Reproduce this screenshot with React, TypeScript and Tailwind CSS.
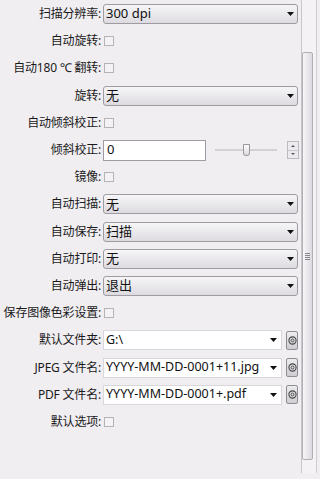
import type { ReactNode } from 'react'

const font = { fontFamily: '"Noto Sans", "Noto Sans CJK SC", sans-serif' }

function Label({ children }: { children: ReactNode }) {
  return (
    <div className="flex items-center justify-end pr-[2px] text-[12px] tracking-[-0.2px] text-[#1a1a1a] whitespace-nowrap">
      {children}
    </div>
  )
}

function Check() {
  return <div className="ml-[1px] h-[10px] w-[10px] border border-[#b5b3b8] bg-[#f4f2f5]" />
}

function Arrow() {
  return (
    <svg width="7" height="4" viewBox="0 0 7 4">
      <path d="M0 0h7L3.5 4z" fill="#111" />
    </svg>
  )
}

function Select({ value }: { value: string }) {
  return (
    <div className="flex h-[20px] w-[195px] items-center justify-between rounded-[3px] border border-[#9e9ca2] bg-gradient-to-b from-[#f6f5f7] to-[#dddbe0] pl-[2px] pr-[3px] text-[13px] text-[#111]">
      <span>{value}</span>
      <Arrow />
    </div>
  )
}

function AtButton() {
  return (
    <div className="flex h-[19px] w-[12px] items-center justify-center rounded-[2px] border border-[#8f8d93] bg-gradient-to-b from-[#ecebee] to-[#cfcdd2]">
      <svg width="9" height="9" viewBox="0 0 10 10">
        <circle cx="5" cy="5" r="4" fill="none" stroke="#444" strokeWidth="1.2" />
        <circle cx="5" cy="5" r="1.6" fill="none" stroke="#444" strokeWidth="1" />
      </svg>
    </div>
  )
}

function Combo({ value }: { value: string }) {
  return (
    <div className="flex items-center gap-[4px]">
      <div className="flex h-[20px] w-[179px] items-center justify-between border border-[#d9d7dc] bg-white pl-[2px] pr-[4px] text-[12.5px] text-[#111]">
        <span>{value}</span>
        <Arrow />
      </div>
      <AtButton />
    </div>
  )
}

function Row({ label, children }: { label: ReactNode; children: ReactNode }) {
  return (
    <div className="grid h-[27.2px] grid-cols-[103px_1fr] items-center">
      <Label>{label}</Label>
      <div className="flex items-center">{children}</div>
    </div>
  )
}

export default function App() {
  return (
    <div className="flex h-[479px] w-[320px] overflow-hidden bg-[#f1eef2]" style={font}>
      <div className="w-[301px] pt-[0.5px]">
        <Row label="扫描分辨率:">
          <Select value="300 dpi" />
        </Row>
        <Row label="自动旋转:">
          <Check />
        </Row>
        <Row label="自动180 ℃ 翻转:">
          <Check />
        </Row>
        <Row label="旋转:">
          <Select value="无" />
        </Row>
        <Row label="自动倾斜校正:">
          <Check />
        </Row>
        <Row label="倾斜校正:">
          <div className="flex h-[21px] w-[103px] items-center border border-[#9e9ca2] bg-white pl-[3px] text-[13px] text-[#111]">
            0
          </div>
          <div className="relative ml-[9px] h-[12px] w-[62px]">
            <div className="absolute left-0 right-0 top-[5px] h-[2px] bg-[#d3d1d6]" />
            <div className="absolute left-[28px] top-0 h-[12px] w-[7px] rounded-b-[4px] rounded-t-[1px] border border-[#9a989e] bg-gradient-to-b from-[#fbfbfc] to-[#dedce1]" />
          </div>
          <div className="ml-[10px] flex h-[18px] w-[12px] flex-col border border-[#bdbbc0] bg-[#eceaee]">
            <div className="flex flex-1 items-center justify-center border-b border-[#c9c7cc]">
              <svg width="4" height="2" viewBox="0 0 4 2"><path d="M0 2h4L2 0z" fill="#555" /></svg>
            </div>
            <div className="flex flex-1 items-center justify-center">
              <svg width="4" height="2" viewBox="0 0 4 2"><path d="M0 0h4L2 2z" fill="#555" /></svg>
            </div>
          </div>
        </Row>
        <Row label="镜像:">
          <Check />
        </Row>
        <Row label="自动扫描:">
          <Select value="无" />
        </Row>
        <Row label="自动保存:">
          <Select value="扫描" />
        </Row>
        <Row label="自动打印:">
          <Select value="无" />
        </Row>
        <Row label="自动弹出:">
          <Select value="退出" />
        </Row>
        <Row label="保存图像色彩设置:">
          <Check />
        </Row>
        <Row label="默认文件夹:">
          <Combo value="G:\" />
        </Row>
        <Row label="JPEG 文件名:">
          <Combo value="YYYY-MM-DD-0001+11.jpg" />
        </Row>
        <Row label="PDF 文件名:">
          <Combo value="YYYY-MM-DD-0001+.pdf" />
        </Row>
        <Row label="默认选项:">
          <Check />
        </Row>
      </div>
      <div className="flex h-[473px] w-[16px] border-l border-[#c8c6cb] bg-[#f4f2f5]">
        <div className="flex-1 pt-[52px]">
          <div className="flex h-[408px] w-[11px] items-center justify-center rounded-[2px] border border-[#b1afb4] bg-gradient-to-r from-[#f7f6f8] to-[#dcdae0]">
            <div className="flex flex-col gap-[1px]">
              <div className="h-[1px] w-[5px] bg-[#8a888d]" />
              <div className="h-[1px] w-[5px] bg-[#8a888d]" />
              <div className="h-[1px] w-[5px] bg-[#8a888d]" />
              <div className="h-[1px] w-[5px] bg-[#8a888d]" />
            </div>
          </div>
        </div>
        <div className="w-[1px] bg-[#cfcdd2]" />
      </div>
    </div>
  )
}
